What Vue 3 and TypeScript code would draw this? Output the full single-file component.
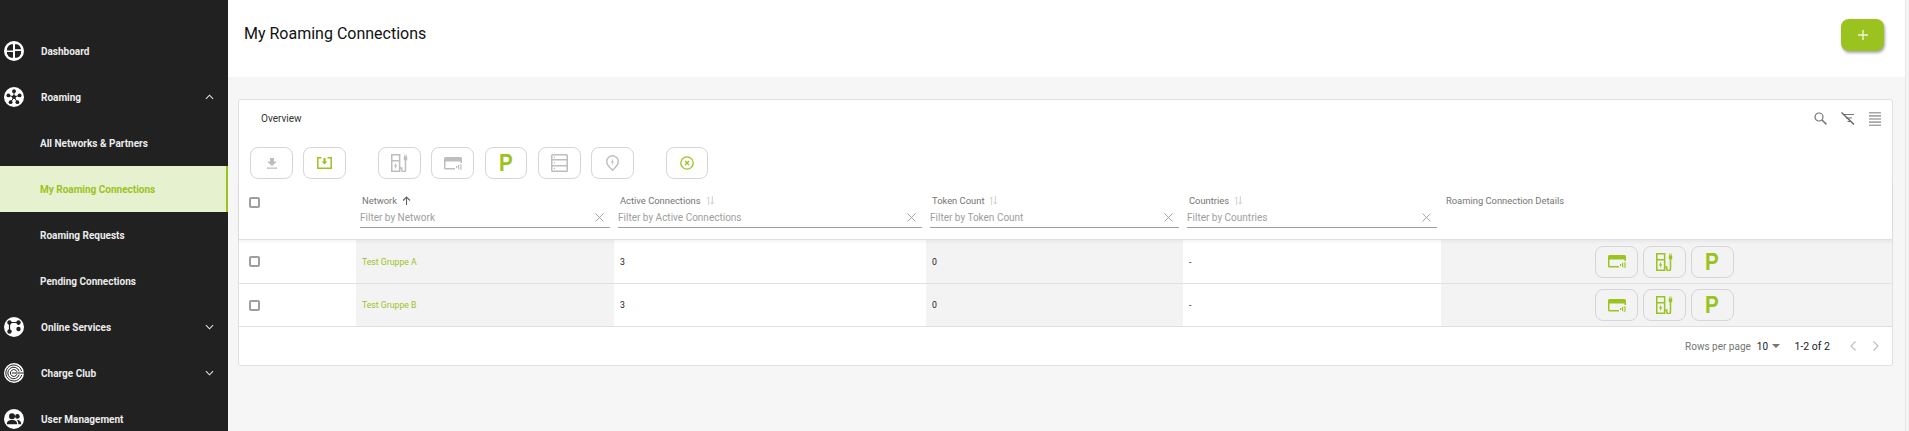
<script setup lang="ts">
interface NavItem { label: string; icon?: string; chevron?: 'up' | 'down'; active?: boolean }
const nav: NavItem[] = [
  { label: 'Dashboard', icon: 'nav-dash' },
  { label: 'Roaming', icon: 'nav-roam', chevron: 'up' },
  { label: 'All Networks & Partners' },
  { label: 'My Roaming Connections', active: true },
  { label: 'Roaming Requests' },
  { label: 'Pending Connections' },
  { label: 'Online Services', icon: 'nav-online', chevron: 'down' },
  { label: 'Charge Club', icon: 'nav-club', chevron: 'down' },
  { label: 'User Management', icon: 'nav-user' },
]
const columns = [
  { label: 'Network', filter: 'Filter by Network', sorted: true },
  { label: 'Active Connections', filter: 'Filter by Active Connections' },
  { label: 'Token Count', filter: 'Filter by Token Count' },
  { label: 'Countries', filter: 'Filter by Countries' },
]
const rows = [
  { name: 'Test Gruppe A', active: '3', tokens: '0', countries: '-' },
  { name: 'Test Gruppe B', active: '3', tokens: '0', countries: '-' },
]
</script>

<template>
  <svg class="defs" aria-hidden="true">
    <symbol id="nav-dash" viewBox="0 0 20 20">
      <circle cx="10" cy="10" r="10" fill="#fff" />
      <g fill="#212121">
        <path d="M9 3.2V9.4H3V7.2L4.8 4.4 7 3.2Z" />
        <path d="M9 11V16.8H7L4.6 15.4 3 12.8V11Z" />
        <path d="M11 3.2H13L15.4 4.6 17 7.4V8.2H11Z" />
        <path d="M11 10H17V12.8L15.4 15.4 13 16.8H11Z" />
      </g>
    </symbol>
    <symbol id="nav-roam" viewBox="0 0 20 20">
      <circle cx="10" cy="10" r="10" fill="#fff" />
      <g stroke="#212121" stroke-width="1"><path d="M10 10V4.5M10 10 4.8 8.5M10 10 15.2 8.5M10 10 6.8 15M10 10 13.2 15" /></g>
      <g fill="#212121"><circle cx="10" cy="10" r="2" /><circle cx="10" cy="4.2" r="1.9" /><circle cx="4.4" cy="8.4" r="1.9" /><circle cx="15.6" cy="8.4" r="1.9" /><circle cx="6.6" cy="15.2" r="1.9" /><circle cx="13.4" cy="15.2" r="1.9" /></g>
    </symbol>
    <symbol id="nav-online" viewBox="0 0 20 20">
      <circle cx="10" cy="10" r="10" fill="#fff" />
      <path fill="none" stroke="#212121" stroke-width="1.2" d="M5.5 5.5H14.5M5.5 5.5V14.5M14.5 5.5V8" />
      <g fill="#212121"><circle cx="5.5" cy="5.5" r="2.2" /><circle cx="14.5" cy="5.5" r="2.2" /><circle cx="5.5" cy="14.5" r="2.2" /><circle cx="14.5" cy="12" r="2.2" /></g>
    </symbol>
    <symbol id="nav-club" viewBox="0 0 20 20">
      <circle cx="10" cy="10" r="10" fill="#fff" />
      <g fill="none" stroke="#212121" stroke-width="1"><path d="M17.6 8A8 8 0 1 0 17.6 12" /><path d="M15.2 8.4A5.8 5.8 0 1 0 15.2 11.6" /><path d="M13 8.8A3.4 3.4 0 1 0 13 11.2" /><path d="M8 10H20" /></g>
    </symbol>
    <symbol id="nav-user" viewBox="0 0 20 20">
      <circle cx="10" cy="10" r="10" fill="#fff" />
      <g fill="#212121"><circle cx="8" cy="7.2" r="3" /><circle cx="13.4" cy="7.4" r="2.3" /><path d="M2.8 15.2C2.8 12 5 11 8 11S13.2 12 13.2 15.2ZM14.3 15.2C14.3 13.2 13.8 11.9 12.8 11C15 10.8 17.2 11.7 17.2 15.2Z" /></g>
    </symbol>
    <symbol id="ic-charger" viewBox="0 0 17 18">
      <path fill="currentColor" fill-rule="evenodd" d="M0 0H9.4V18H0ZM1.5 1.5V6H7.9V1.5ZM1.5 7.5V16.5H7.9V7.5ZM5 8.4 3 12.4H4.3L3.9 15.6 6.3 11.2H5Z" />
      <path fill="none" stroke="currentColor" stroke-width="1.5" d="M9 14H10.7V15.8A1.9 1.9 0 0 0 14.5 15.8V6" />
      <path fill="currentColor" d="M12.8 2.6H13.4V0.6H14.2V2.6H14.8V0.6H15.5V2.6H16.2V6.2H12.8Z" />
    </symbol>
    <symbol id="ic-card" viewBox="0 0 18 13">
      <path fill="currentColor" fill-rule="evenodd" d="M1.5 0H16.5A1.5 1.5 0 0 1 18 1.5V6H16.5V4.6H1.5V11.1H11V12.6H1.5A1.5 1.5 0 0 1 0 11.1V1.5A1.5 1.5 0 0 1 1.5 0Z" />
      <path fill="currentColor" d="M12 9H13.2V11H12ZM14 8H15V12H14ZM15.8 7H16.6V13H15.8ZM17.4 7.5H18V12.5H17.4Z" />
    </symbol>
    <symbol id="ic-list" viewBox="0 0 17 18">
      <path fill="currentColor" fill-rule="evenodd" d="M1.5 0H15.5A1.5 1.5 0 0 1 17 1.5V16.5A1.5 1.5 0 0 1 15.5 18H1.5A1.5 1.5 0 0 1 0 16.5V1.5A1.5 1.5 0 0 1 1.5 0ZM1.5 1.5V5H15.5V1.5ZM1.5 6.5V11H15.5V6.5ZM1.5 12.5V16.5H15.5V12.5Z" />
      <circle cx="3.4" cy="3.2" r=".8" fill="currentColor" /><circle cx="3.4" cy="8.8" r=".8" fill="currentColor" /><circle cx="3.4" cy="14.5" r=".8" fill="currentColor" />
    </symbol>
    <symbol id="ic-pin" viewBox="0 0 13 16">
      <path fill="none" stroke="currentColor" stroke-width="1.4" d="M6.5.7A5.8 5.8 0 0 1 12.3 6.5C12.3 9.6 9 13 6.5 15.2 4 13 .7 9.6.7 6.5A5.8 5.8 0 0 1 6.5.7Z" />
      <path fill="currentColor" d="M7 3.5 5 7.4H6.2L5.8 10.4 8 6.4H6.8Z" />
    </symbol>
  </svg>

  <div class="app">
    <nav class="sidebar">
      <a v-for="item in nav" :key="item.label" class="nav-item" :class="{ active: item.active, sub: !item.icon }">
        <svg v-if="item.icon" class="nav-icon"><use :href="'#' + item.icon" /></svg>
        <span class="nav-label">{{ item.label }}</span>
        <svg v-if="item.chevron" class="nav-chev" :class="item.chevron" viewBox="0 0 10 6"><path d="M1 1 5 5 9 1" fill="none" stroke="#e6e6e6" stroke-width="1.2" /></svg>
      </a>
    </nav>

    <main class="main">
      <header class="page-head">
        <h1>My Roaming Connections</h1>
        <button class="add-btn" type="button" aria-label="Add">
          <svg viewBox="0 0 10 10" width="10" height="10"><path d="M5 0V10M0 5H10" stroke="#eef6d5" stroke-width="1.4" /></svg>
        </button>
      </header>

      <div class="content">
        <section class="card">
          <div class="card-top">
            <span class="tab">Overview</span>
            <div class="top-icons">
              <svg class="ti search" viewBox="0 0 13 13"><circle cx="5" cy="5" r="4" fill="none" stroke="#757575" stroke-width="1.2" /><path d="M8 8 12.4 12.4" stroke="#757575" stroke-width="1.5" /></svg>
              <svg class="ti filt" viewBox="0 0 14 13"><path d="M3 2.5H13M5 6H11M6.5 9.5H9.5" stroke="#757575" stroke-width="1.2" /><path d="M.5.5 13 12.5" stroke="#616161" stroke-width="1.3" /></svg>
              <svg class="ti menu" viewBox="0 0 12 14"><path d="M0 .8H12M0 3.9H12M0 7H12M0 10.1H12M0 13.2H12" stroke="#a6a6a6" stroke-width="1.6" /></svg>
            </div>
          </div>

          <div class="toolbar">
            <div class="tool-group">
              <button class="tbtn" type="button"><svg width="12" height="11" viewBox="0 0 12 11" class="gray"><path fill="currentColor" d="M4 0H8V3.5H11L6 8 1 3.5H4ZM1 9.6H11V10.8H1Z" /></svg></button>
              <button class="tbtn" type="button"><svg width="15" height="12" viewBox="0 0 15 12" class="green"><path fill="none" stroke="currentColor" stroke-width="1.5" d="M4.5 .8H.8V11.2H14.2V.8H10.5" /><path fill="currentColor" d="M6.4 1H8.6V4.6H10.4L7.5 7.6 4.6 4.6H6.4Z" /></svg></button>
            </div>
            <div class="tool-group">
              <button class="tbtn" type="button"><svg width="17" height="18" class="gray"><use href="#ic-charger" /></svg></button>
              <button class="tbtn" type="button"><svg width="18" height="13" class="gray"><use href="#ic-card" /></svg></button>
              <button class="tbtn slim" type="button"><span class="p green">P</span></button>
              <button class="tbtn" type="button"><svg width="17" height="18" class="gray"><use href="#ic-list" /></svg></button>
              <button class="tbtn" type="button"><svg width="13" height="16" class="gray"><use href="#ic-pin" /></svg></button>
            </div>
            <div class="tool-group">
              <button class="tbtn last" type="button"><svg width="14" height="14" viewBox="0 0 14 14" class="green"><circle cx="7" cy="7" r="6.2" fill="none" stroke="currentColor" stroke-width="1.3" /><path d="M5 5 9 9M9 5 5 9" stroke="currentColor" stroke-width="1.3" /></svg></button>
            </div>
          </div>

          <div class="grid head">
            <div class="hcell check-cell"><span class="cb"></span></div>
            <div v-for="c in columns" :key="c.label" class="hcell">
              <div class="hlabel">
                <span>{{ c.label }}</span>
                <svg v-if="c.sorted" width="9" height="9" viewBox="0 0 9 9"><path d="M4.5 9V1M1 4.5 4.5 1 8 4.5" fill="none" stroke="#616161" stroke-width="1.1" /></svg>
                <svg v-else width="9" height="9" viewBox="0 0 9 9"><path d="M2.7 9V1M1 2.6 2.7 .8M6.3 0V8M4.7 6.4 6.3 8.2 8 6.4" fill="none" stroke="#cfcfcf" stroke-width="1" /></svg>
              </div>
              <div class="hfilter">
                <span>{{ c.filter }}</span>
                <svg width="9" height="9" viewBox="0 0 9 9"><path d="M.5.5 8.5 8.5M8.5.5.5 8.5" stroke="#9e9e9e" stroke-width=".9" /></svg>
              </div>
            </div>
            <div class="hcell"><div class="hlabel details">Roaming Connection Details</div></div>
          </div>

          <div v-for="r in rows" :key="r.name" class="grid row">
            <div class="row-check"><span class="cb"></span></div>
            <div class="cell shade link">{{ r.name }}</div>
            <div class="cell">{{ r.active }}</div>
            <div class="cell shade">{{ r.tokens }}</div>
            <div class="cell">{{ r.countries }}</div>
            <div class="cell shade actions">
              <button class="tbtn" type="button"><svg width="18" height="13" class="green"><use href="#ic-card" /></svg></button>
              <button class="tbtn" type="button"><svg width="17" height="18" class="green"><use href="#ic-charger" /></svg></button>
              <button class="tbtn" type="button"><span class="p green">P</span></button>
            </div>
          </div>

          <footer class="pager">
            <span class="rpp">Rows per page</span>
            <span class="num">10</span>
            <svg class="caret" width="8" height="4" viewBox="0 0 8 4"><path d="M0 0H8L4 4Z" fill="#757575" /></svg>
            <span class="range">1-2 of 2</span>
            <svg class="pg first" width="6" height="10" viewBox="0 0 6 10"><path d="M5.5.5 1 5 5.5 9.5" fill="none" stroke="#bdbdbd" stroke-width="1.1" /></svg>
            <svg class="pg" width="6" height="10" viewBox="0 0 6 10"><path d="M.5.5 5 5 .5 9.5" fill="none" stroke="#bdbdbd" stroke-width="1.1" /></svg>
          </footer>
        </section>
      </div>
    </main>
    <div class="rail"></div>
  </div>
</template>

<style>
html, body { margin: 0; background: #f6f6f6; overflow: hidden; }
</style>

<style scoped>
.defs { position: absolute; width: 0; height: 0; overflow: hidden; }
.app {
  display: flex;
  height: 431px;
  overflow: hidden;
  font-family: Roboto, "Liberation Sans", sans-serif;
  font-size: 10px;
  color: #212121;
  background: #f6f6f6;
}
.sidebar {
  flex: 0 0 228px;
  box-sizing: border-box;
  padding-top: 28px;
  background: #212121;
  overflow: hidden;
}
.nav-item {
  display: flex;
  align-items: center;
  box-sizing: border-box;
  height: 46px;
  padding-left: 4px;
  color: #ececec;
  font-size: 10px;
  font-weight: 700;
}
.nav-item.sub { padding-left: 40px; }
.nav-item.active {
  background: #e6f1d0;
  color: #9bc31f;
  border-right: 2px solid #9bc31f;
}
.nav-icon { width: 20px; height: 20px; margin-right: 17px; flex: none; }
.nav-chev { width: 9px; height: 6px; margin-left: auto; margin-right: 14px; }
.nav-chev.up { transform: rotate(180deg); }

.main { flex: 1; min-width: 0; display: flex; flex-direction: column; }
.rail { flex: 0 0 4px; background: #f3f3f3; border-left: 1px solid #e8e8e8; box-sizing: border-box; }
.page-head {
  flex: none;
  display: flex;
  align-items: flex-start;
  justify-content: space-between;
  box-sizing: border-box;
  height: 77px;
  padding: 19px 21px 0 16px;
  background: #fff;
}
.page-head h1 {
  margin: 5px 0 0;
  font-size: 16px;
  line-height: 20px;
  font-weight: 400;
  color: #111;
}
.add-btn {
  display: flex;
  align-items: center;
  justify-content: center;
  width: 43px;
  height: 32px;
  padding: 0;
  border: 0;
  border-radius: 8px;
  background: #9bc31f;
  box-shadow: 1px 2px 3px rgba(0, 0, 0, 0.35);
}
.content { flex: 1; padding: 22px 12px 0 10px; background: #f6f6f6; }
.card {
  box-sizing: border-box;
  height: 267px;
  background: #fff;
  border: 1px solid #e0e0e0;
  border-radius: 3px;
}
.card-top {
  display: flex;
  align-items: center;
  justify-content: space-between;
  box-sizing: border-box;
  height: 47px;
  padding: 0 11px 10px 22px;
}
.tab { font-size: 10px; color: #333; }
.top-icons { display: flex; align-items: center; }
.ti { display: block; }
.search { width: 13px; height: 13px; }
.filt { width: 14px; height: 13px; margin-left: 14px; }
.menu { width: 12px; height: 14px; margin-left: 14px; }

.toolbar { display: flex; gap: 32px; height: 32px; padding-left: 11px; }
.tool-group { display: flex; gap: 10px; }
.tbtn {
  display: flex;
  align-items: center;
  justify-content: center;
  box-sizing: border-box;
  width: 43px;
  height: 32px;
  padding: 0;
  background: transparent;
  border: 1px solid #d5d5da;
  border-radius: 8px;
  overflow: hidden;
}
.tbtn.slim { width: 42px; margin: 0 1px; }
.tbtn.last { width: 42px; }
.gray { color: #bdbdbd; }
.green { color: #9bc31f; }
.p { display: block; font-size: 24px; line-height: 24px; font-weight: 900; transform: scaleX(0.86); }

.grid { display: grid; grid-template-columns: 117px 258px 312px 257px 258px 1fr; }
.head { height: 61px; box-sizing: border-box; border-bottom: 1px solid #e0e0e0; box-shadow: 0 2px 3px rgba(0, 0, 0, 0.05); position: relative; }
.hcell { padding: 14px 4px 0; min-width: 0; }
.hlabel {
  display: flex;
  align-items: center;
  gap: 5px;
  height: 14px;
  margin-left: 2px;
  font-size: 9.4px;
  color: #757575;
}
.hlabel.details { margin-left: 1px; }
.hfilter {
  display: flex;
  align-items: center;
  justify-content: space-between;
  height: 21px;
  box-sizing: border-box;
  padding-right: 6px;
  border-bottom: 1px solid #9e9e9e;
  font-size: 10px;
  color: #9e9e9e;
}
.check-cell { padding: 18px 0 0 10px; }
.row-check { padding-left: 10px; display: flex; align-items: center; }
.cb {
  display: block;
  box-sizing: border-box;
  width: 11px;
  height: 11px;
  border: 2px solid #9e9e9e;
  border-radius: 2px;
}
.row { height: 44px; box-sizing: border-box; border-bottom: 1px solid #e0e0e0; }
.row + .row { height: 43px; }
.cell { display: flex; align-items: center; padding-left: 6px; font-size: 8.7px; color: #212121; min-width: 0; }
.shade { background: #f3f3f3; }
.link { color: #9bc31f; }
.actions { justify-content: flex-end; gap: 5px; padding: 0 158px 0 0; }
.pager { display: flex; align-items: center; height: 38px; padding-right: 13px; justify-content: flex-end; font-size: 10px; }
.rpp { color: #757575; }
.num { margin-left: 6px; color: #212121; }
.caret { margin-left: 4px; }
.range { margin-left: 14.5px; font-size: 10.5px; color: #212121; }
.pg { margin-left: 17px; }
.pg.first { margin-left: 20px; }
</style>
